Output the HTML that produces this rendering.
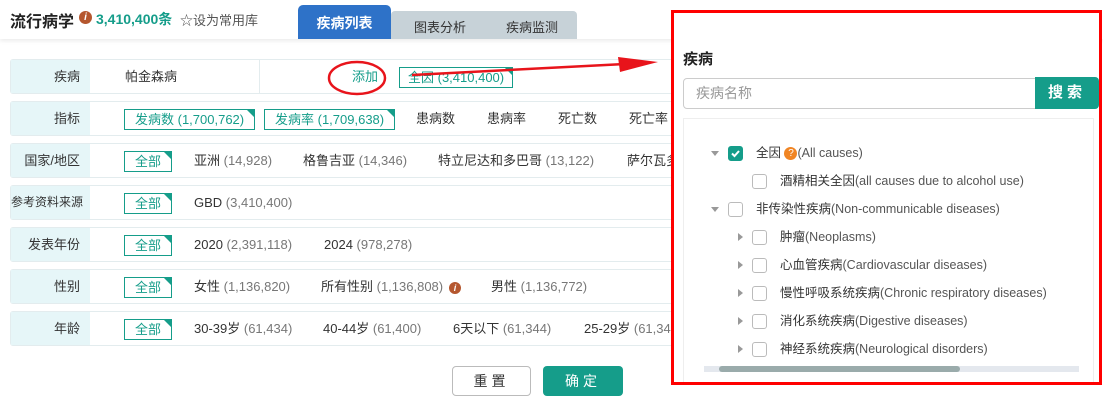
<!DOCTYPE html>
<html><head><meta charset="utf-8"><style>
*{margin:0;padding:0;box-sizing:border-box}
body{width:1103px;height:414px;overflow:hidden;background:#fff;font-family:"Liberation Sans","Noto Sans CJK SC",sans-serif;font-size:13px;color:#333;position:relative}
.abs{position:absolute;white-space:nowrap}
.hdr{position:absolute;left:0;top:0;width:1103px;height:39px;box-shadow:0 2px 4px rgba(0,0,0,.08)}
.row{position:absolute;left:10px;width:680px;height:35px;border:1px solid #e3ecee;border-radius:3px;background:#fff}
.lab{position:absolute;left:0;top:0;width:79px;height:33px;background:#e6f6f8;text-align:right;padding-right:10px;line-height:33px;font-size:13px;color:#333;white-space:nowrap}
.tag{position:absolute;top:7px;height:21px;border:1px solid #159d8a;color:#159d8a;line-height:19px;padding:0 10px;font-size:13px;background:#fff}
.tag:after{content:"";position:absolute;right:0;top:0;border-top:7px solid #159d8a;border-left:7px solid transparent}
.it{position:absolute;top:0;line-height:33px;font-size:13px;color:#333;white-space:nowrap}
.it span{color:#777}
.cb{position:absolute;width:15px;height:15px;border:1px solid #bbb;border-radius:3px;background:#fff}
.tri{position:absolute;width:0;height:0}
.td{border-left:4px solid transparent;border-right:4px solid transparent;border-top:5px solid #999}
.tr{border-top:4px solid transparent;border-bottom:4px solid transparent;border-left:5px solid #999}
.tt{position:absolute;font-size:12.5px;color:#333;line-height:16px;white-space:nowrap}
.tt span{color:#555}
</style></head><body>
<div class="hdr"></div>
<div class="abs" style="left:10px;top:8px;font-size:16px;font-weight:bold;color:#222">流行病学</div>
<div class="abs" style="left:79px;top:11px;width:13px;height:13px;border-radius:50%;background:#b5572f;color:#fff;font-size:10px;font-weight:bold;text-align:center;line-height:13px;font-style:italic">i</div>
<div class="abs" style="left:96px;top:9px;font-size:14px;font-weight:bold;color:#159d8a">3,410,400条</div>
<div class="abs" style="left:180px;top:10px;font-size:13px;color:#555">☆设为常用库</div>
<div class="abs" style="left:391px;top:11px;width:186px;height:28px;background:#c7d2d8;border-radius:4px 4px 0 0"></div>
<div class="abs" style="left:298px;top:5px;width:93px;height:34px;background:#2e72c8;border-radius:5px 5px 0 0;color:#fff;font-weight:bold;font-size:14px;text-align:center;line-height:36px">疾病列表</div>
<div class="abs" style="left:414px;top:17px;font-size:13px;color:#333">图表分析</div>
<div class="abs" style="left:506px;top:17px;font-size:13px;color:#333">疾病监测</div>

<div class="row" style="top:59px"><div class="lab">疾病</div><div class="it" style="left:114px">帕金森病</div><div style="position:absolute;left:248px;top:0;width:1px;height:33px;background:#e3ecee"></div>
<div class="it" style="left:341px;color:#159d8a">添加</div><div class="tag" style="left:388px;top:7px;height:21px;padding:0 8px">全因 (3,410,400)</div></div>
<div class="row" style="top:101px"><div class="lab">指标</div>
<div class="tag" style="left:113px">发病数 (1,700,762)</div><div class="tag" style="left:253px">发病率 (1,709,638)</div>
<div class="it" style="left:405px">患病数</div><div class="it" style="left:476px">患病率</div><div class="it" style="left:547px">死亡数</div><div class="it" style="left:618px">死亡率</div></div>
<div class="row" style="top:143px"><div class="lab">国家/地区</div><div class="tag" style="left:113px">全部</div>
<div class="it" style="left:183px">亚洲 <span>(14,928)</span></div><div class="it" style="left:292px">格鲁吉亚 <span>(14,346)</span></div><div class="it" style="left:427px">特立尼达和多巴哥 <span>(13,122)</span></div><div class="it" style="left:616px">萨尔瓦多</div></div>
<div class="row" style="top:185px"><div class="lab" style="font-size:12px;padding-right:8px">参考资料来源</div><div class="tag" style="left:113px">全部</div><div class="it" style="left:183px">GBD <span>(3,410,400)</span></div></div>
<div class="row" style="top:227px"><div class="lab">发表年份</div><div class="tag" style="left:113px">全部</div><div class="it" style="left:183px">2020 <span>(2,391,118)</span></div><div class="it" style="left:313px">2024 <span>(978,278)</span></div></div>
<div class="row" style="top:269px"><div class="lab">性别</div><div class="tag" style="left:113px">全部</div><div class="it" style="left:183px">女性 <span>(1,136,820)</span></div><div class="it" style="left:310px">所有性别 <span>(1,136,808)</span></div>
<div style="position:absolute;left:438px;top:12px;width:12px;height:12px;border-radius:50%;background:#b5572f;color:#fff;font-size:9px;text-align:center;line-height:12px;font-weight:bold;font-style:italic">i</div>
<div class="it" style="left:480px">男性 <span>(1,136,772)</span></div></div>
<div class="row" style="top:311px"><div class="lab">年龄</div><div class="tag" style="left:113px">全部</div><div class="it" style="left:183px">30-39岁 <span>(61,434)</span></div><div class="it" style="left:312px">40-44岁 <span>(61,400)</span></div><div class="it" style="left:442px">6天以下 <span>(61,344)</span></div><div class="it" style="left:573px">25-29岁 <span>(61,344)</span></div></div>

<div class="abs" style="left:452px;top:366px;width:79px;height:30px;border:1px solid #bbb;border-radius:4px;text-align:center;line-height:28px;font-size:14px;letter-spacing:4px;color:#333">重置</div>
<div class="abs" style="left:543px;top:366px;width:80px;height:30px;background:#159d8a;border-radius:4px;text-align:center;line-height:30px;font-size:14px;letter-spacing:4px;color:#fff">确定</div>

<svg class="abs" style="left:0;top:0" width="1103" height="414">
<ellipse cx="357" cy="78" rx="28" ry="16" fill="none" stroke="#e8141b" stroke-width="2.5"/>
<line x1="412" y1="75" x2="625" y2="64" stroke="#e8141b" stroke-width="2.5"/>
<polygon points="618,57 658,62 620,72" fill="#e8141b"/>
</svg>

<div class="abs" style="left:671px;top:10px;width:431px;height:375px;border:3px solid #f00;background:#fff"></div>
<div class="abs" style="left:683px;top:48px;font-size:15px;font-weight:bold;color:#222">疾病</div>
<div class="abs" style="left:683px;top:78px;width:360px;height:31px;border:1px solid #ccc;border-radius:4px 0 0 4px;padding-left:12px;line-height:29px;font-size:14px;color:#999">疾病名称</div>
<div class="abs" style="left:1035px;top:77px;width:64px;height:32px;background:#159d8a;border-radius:0 4px 4px 0;color:#fff;text-align:center;line-height:32px;font-size:15px;font-weight:bold;letter-spacing:4px">搜索</div>
<div class="abs" style="left:683px;top:118px;width:411px;height:264px;border:1px solid #eee;border-bottom:none"></div>

<div class="tri td" style="left:711px;top:151px"></div>
<div class="cb" style="left:728px;top:146px;background:#159d8a;border-color:#159d8a"><svg width="13" height="13" style="position:absolute;left:0;top:0"><path d="M3 6.5 L5.5 9 L10 4" stroke="#fff" stroke-width="2" fill="none"/></svg></div>
<div class="tt" style="left:756px;top:145px">全因 <span style="display:inline-block;width:13px;height:13px;border-radius:50%;background:#f08524;color:#fff;font-size:10px;text-align:center;line-height:13px;vertical-align:1px">?</span><span>(All causes)</span></div>
<div class="cb" style="left:752px;top:174px"></div><div class="tt" style="left:780px;top:173px">酒精相关全因<span>(all causes due to alcohol use)</span></div>
<div class="tri td" style="left:711px;top:207px"></div>
<div class="cb" style="left:728px;top:202px"></div><div class="tt" style="left:756px;top:201px">非传染性疾病<span>(Non-communicable diseases)</span></div>
<div class="tri tr" style="left:738px;top:233px"></div><div class="cb" style="left:752px;top:230px"></div><div class="tt" style="left:780px;top:229px">肿瘤<span>(Neoplasms)</span></div>
<div class="tri tr" style="left:738px;top:261px"></div><div class="cb" style="left:752px;top:258px"></div><div class="tt" style="left:780px;top:257px">心血管疾病<span>(Cardiovascular diseases)</span></div>
<div class="tri tr" style="left:738px;top:289px"></div><div class="cb" style="left:752px;top:286px"></div><div class="tt" style="left:780px;top:285px">慢性呼吸系统疾病<span>(Chronic respiratory diseases)</span></div>
<div class="tri tr" style="left:738px;top:317px"></div><div class="cb" style="left:752px;top:314px"></div><div class="tt" style="left:780px;top:313px">消化系统疾病<span>(Digestive diseases)</span></div>
<div class="tri tr" style="left:738px;top:345px"></div><div class="cb" style="left:752px;top:342px"></div><div class="tt" style="left:780px;top:341px">神经系统疾病<span>(Neurological disorders)</span></div>
<div class="abs" style="left:704px;top:366px;width:375px;height:6px;background:#e4e8ee"></div>
<div class="abs" style="left:719px;top:366px;width:241px;height:6px;background:#9aabab;border-radius:3px"></div>
</body></html>
